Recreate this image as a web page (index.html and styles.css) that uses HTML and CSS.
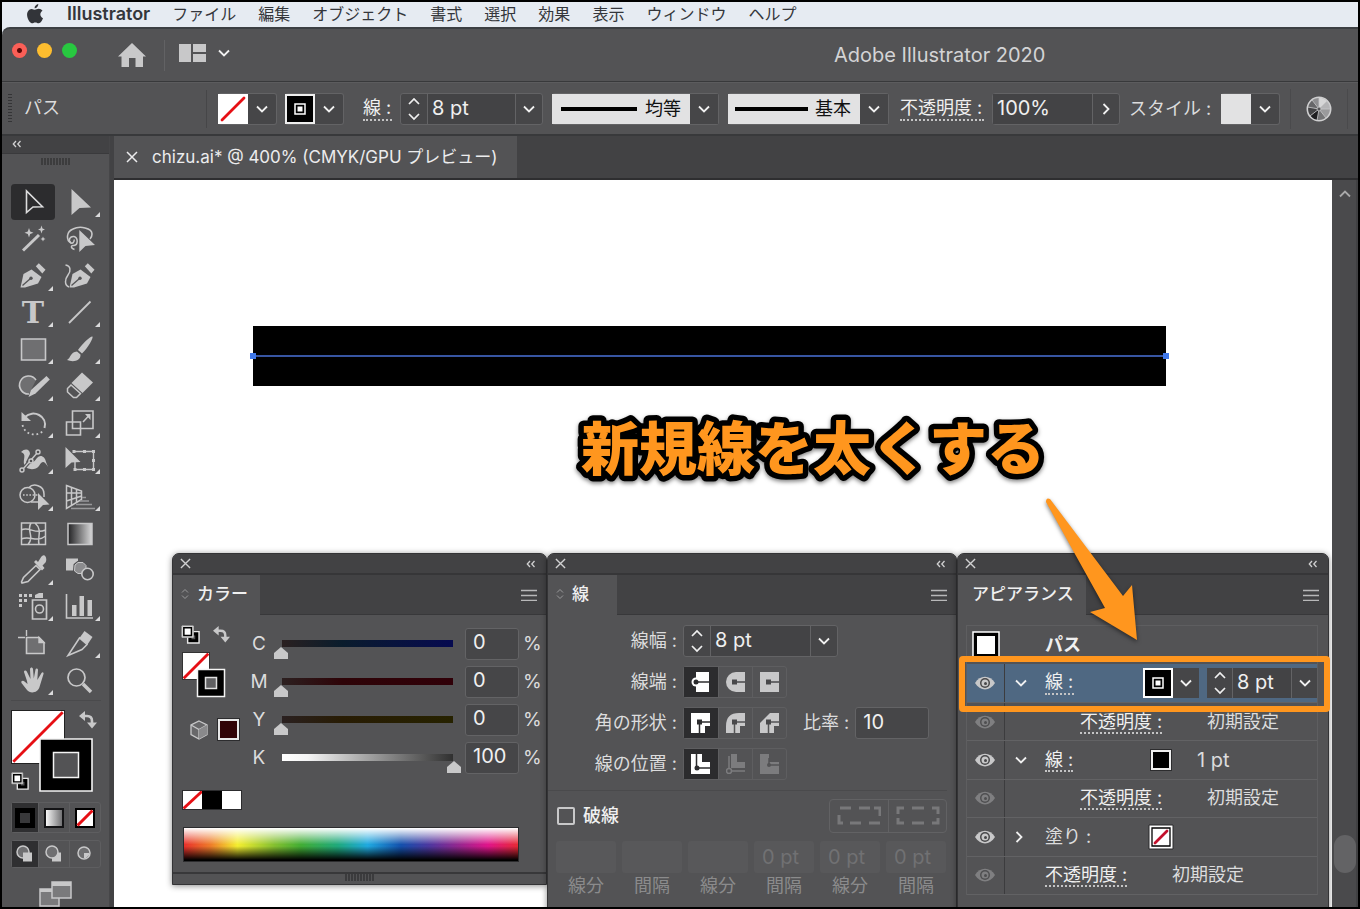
FILE: index.html
```html
<!DOCTYPE html>
<html lang="ja">
<head>
<meta charset="utf-8">
<meta name="viewport" content="width=device-width, initial-scale=1">
<title>Adobe Illustrator 2020</title>
<link rel="stylesheet" href="styles.css">
</head>
<body>
<svg class="sprite" aria-hidden="true">
  <symbol id="chev" viewBox="0 0 14 10"><path d="M2 2.5 7 7.5 12 2.5" fill="none" stroke="currentColor" stroke-width="1.8"/></symbol>
  <symbol id="chev-r" viewBox="0 0 10 14"><path d="M2.500 2 7.500 7 2.500 12" fill="none" stroke="currentColor" stroke-width="1.8"/></symbol>
  <symbol id="step" viewBox="0 0 14 24"><path d="M2 7 7 2 12 7M2 17 7 22 12 17" fill="none" stroke="currentColor" stroke-width="1.7"/></symbol>
  <symbol id="cross" viewBox="0 0 12 12"><path d="M1 1 11 11M11 1 1 11" fill="none" stroke="currentColor" stroke-width="1.5"/></symbol>
  <symbol id="fold" viewBox="0 0 10 8"><path d="M4 1 1.300 4 4 7M8.500 1 5.800 4 8.500 7" fill="none" stroke="currentColor" stroke-width="1.300"/></symbol>
  <symbol id="burger" viewBox="0 0 16 12"><path d="M0 1.500H16M0 6.500H16M0 11.500H16" stroke="currentColor" stroke-width="1.300"/></symbol>
  <symbol id="updown" viewBox="0 0 8 12"><path d="M1 4.500 4 1.500 7 4.500M1 7.500 4 10.500 7 7.500" fill="none" stroke="currentColor"/></symbol>
  <symbol id="grip-h" viewBox="0 0 30 7"><path d="M1 0V7M4 0V7M7 0V7M10 0V7M13 0V7M16 0V7M19 0V7M22 0V7M25 0V7M28 0V7" stroke="#343436" stroke-width="1.500"/></symbol>
  <symbol id="corner" viewBox="0 0 6 6"><path d="M6 0V6H0z" fill="#dadadb"/></symbol>
  <symbol id="eye" viewBox="0 0 20 14"><path d="M0 7C5-1.500 15-1.500 20 7 15 15.500 5 15.500 0 7z" fill="currentColor"/><circle cx="10" cy="7" r="5" fill="#48484a"/><circle cx="10" cy="7" r="3.500" fill="currentColor"/><circle cx="10.500" cy="7.500" r="1.500" fill="#48484a"/></symbol>
  <symbol id="swap" viewBox="0 0 18 18"><path d="M5 5H8Q13 5 13 10V12" fill="none" stroke="#c8c8c9" stroke-width="2.600"/><path d="M0 5 6 0V10zM8 11.500H18L13 17.500z" fill="#c8c8c9"/></symbol>
  <symbol id="defaults" viewBox="0 0 20 20"><path d="M7 7H19V19H7z" fill="#000" stroke="#e8e8e8" stroke-width="1.500"/><path d="M11 11H15V15H11z" fill="#535355"/><path d="M1 1H13V13H1z" fill="#e8e8e8" stroke="#bbb"/><path d="M3 3H11V11H3z" fill="#fff" stroke="#000" stroke-width="1.600"/></symbol>
  <symbol id="none" viewBox="0 0 20 20" preserveAspectRatio="none"><path d="M0 0H20V20H0z" fill="#fff"/><path d="M.500 19.500 19.500 .500" stroke="#e60f14" stroke-width="2.800" vector-effect="non-scaling-stroke"/></symbol>
  <symbol id="nib" viewBox="0 0 44 36"><path d="M9.500 29.500 12.500 16 20.500 11.500 30.500 19 27 25.500 14 29.500z" fill="#c8c8c9"/><path d="M24.800 8.200 27.800 5.200 34.500 11.800 31.300 15.500z" fill="#c8c8c9"/><path d="M11.500 27.500 19.500 20.500" stroke="#535355" stroke-width="1.300"/><circle cx="20" cy="20.300" r="1.700" fill="#535355"/></symbol>
</svg>

<nav class="menubar" aria-label="メニューバー">
  <a class="apple" href="#" aria-label="Apple"><svg width="18" height="20" viewBox="0 0 18 20"><path d="M12.300 0C12.500 2.200 10.600 4.400 8.600 4.300 8.400 2.300 10.300.300 12.300 0zM9 5.700C9.900 5.700 11 4.800 12.700 4.800 14.300 4.800 15.700 5.600 16.500 6.700 13.300 8.600 13.800 13 17 14.300 16.300 16.200 14.600 19.200 12.700 19.300 11.400 19.300 10.900 18.500 9.300 18.500 7.700 18.500 7.200 19.300 5.900 19.300 3.200 19.200-.300 11.900 1.600 7.900 2.500 5.900 4 4.900 5.700 4.900 7 4.900 8 5.700 9 5.700z" fill="#323439"/></svg></a>
  <a class="appname" href="#">Illustrator</a>
  <a href="#">ファイル</a><a href="#">編集</a><a href="#">オブジェクト</a><a href="#">書式</a><a href="#">選択</a><a href="#">効果</a><a href="#">表示</a><a href="#">ウィンドウ</a><a href="#">ヘルプ</a>
</nav>

<div class="app">
  <header class="titlebar">
    <div class="lights">
      <button class="light red" aria-label="閉じる"></button><button class="light yellow" aria-label="しまう"></button><button class="light green" aria-label="拡大"></button>
    </div>
    <button class="home" aria-label="ホーム"><svg width="28" height="26" viewBox="0 0 28 26"><path d="M14 1 28 14.500H25V25H17.500V16H11V25H3.500V14.500H0z" fill="#c8c8c9"/></svg></button>
    <button class="arrange" aria-label="ドキュメントレイアウト"><svg width="27" height="18" viewBox="0 0 27 18"><path d="M0 0H12V18H0zM14 0H27V8H14zM14 10H27V18H14z" fill="#c8c8c9"/></svg><svg class="chev"><use href="#chev"/></svg></button>
    <h1>Adobe Illustrator 2020</h1>
  </header>

  <div class="control">
    <span class="grip-v"></span>
    <span class="kind">パス</span>
    <div class="pick fillpick"><svg class="sw" viewBox="0 0 30 30"><path d="M0 0H30V30H0z" fill="#fff"/><path d="M4 26 26 4" stroke="#e60f14" stroke-width="2.800" stroke-linecap="round"/></svg><button class="drop" aria-label="塗り"><svg class="chev"><use href="#chev"/></svg></button></div>
    <div class="pick strokepick"><svg class="sw" viewBox="0 0 30 30"><path d="M1 1H29V29H1z" stroke="#eee" stroke-width="2"/><path d="M10 10H20V20H10z" stroke="#fff" stroke-width="1.500"/><path d="M12.500 12.500H17.500V17.500H12.500z" fill="#fff"/></svg><button class="drop" aria-label="線"><svg class="chev"><use href="#chev"/></svg></button></div>
    <label class="dotted wlabel" for="w1">線 :</label>
    <div class="combo c-weight"><button class="stepper" aria-label="増減"><svg><use href="#step"/></svg></button><input id="w1" type="text" value="8 pt"><button class="drop" aria-label="線幅の一覧"><svg class="chev"><use href="#chev"/></svg></button></div>
    <div class="profile p-width"><select aria-label="可変線幅プロファイル"><option>均等</option></select><span class="rule"></span><svg class="chev"><use href="#chev"/></svg></div>
    <div class="profile p-brush"><select aria-label="ブラシ定義"><option>基本</option></select><span class="rule"></span><svg class="chev"><use href="#chev"/></svg></div>
    <label class="dotted olabel" for="op">不透明度 :</label>
    <div class="combo c-op"><input id="op" type="text" value="100%"><button class="drop" aria-label="不透明度の一覧"><svg class="chev-r"><use href="#chev-r"/></svg></button></div>
    <span class="slabel">スタイル :</span>
    <div class="pick stylepick"><span class="sw light-sw"></span><button class="drop" aria-label="スタイル"><svg class="chev"><use href="#chev"/></svg></button></div>
    <button class="wheel" aria-label="オブジェクトを再配色"><svg width="26" height="26" viewBox="0 0 26 26"><circle cx="13" cy="13" r="11.500" fill="#8e8e90"/><path d="M13 13V1.500A11.500 11.500 0 0 1 21 5z" fill="#d6d6d7"/><path d="M13 13 21 5A11.500 11.500 0 0 1 24.500 13z" fill="#b4b4b6"/><path d="M13 13H24.500A11.500 11.500 0 0 1 20 22z" fill="#9a9a9c"/><path d="M13 13 20 22A11.500 11.500 0 0 1 11 24.300z" fill="#757577"/><path d="M13 13 11 24.300A11.500 11.500 0 0 1 4 20z" fill="#1f1f21"/><path d="M13 13 4 20A11.500 11.500 0 0 1 1.500 11z" fill="#444446"/><path d="M13 13 1.500 11A11.500 11.500 0 0 1 6 3.800z" fill="#676769"/><path d="M13 13 13 1.500M13 13 21 5M13 13H24.500M13 13 20 22M13 13 11 24.500M13 13 4 20M13 13 1.500 11M13 13 6 4" stroke="#c8c8c9" stroke-width=".800"/><circle cx="13" cy="13" r="11.700" fill="none" stroke="#cfcfd0" stroke-width="1.600"/><circle cx="13" cy="13" r="2" fill="#555557" stroke="#c8c8c9" stroke-width=".800"/></svg></button>
  </div>

  <div class="workspace">
    <aside class="tools">
      <div class="strip"><svg class="fold"><use href="#fold"/></svg></div>
      <svg class="grip"><use href="#grip-h"/></svg>
      <div class="toolgrid">
        <button class="on" aria-label="選択ツール"><svg viewBox="0 0 44 36"><path d="M15.500 7V28.500L22 23 31.500 22.800z" fill="none" stroke="#dcdcdd" stroke-width="1.600"/></svg></button>
        <button aria-label="ダイレクト選択ツール"><svg viewBox="0 0 44 36"><path d="M13.500 5V31L21.500 24 33 23.500z" fill="#c8c8c9"/></svg><svg class="corner"><use href="#corner"/></svg></button>
        <button aria-label="自動選択ツール"><svg viewBox="0 0 44 36"><path d="M12 29.500 28 14" stroke="#c8c8c9" stroke-width="3"/><path d="M18 7 19.200 10.600 22.500 11.800 19.200 13 18 16.500 16.800 13 13.500 11.800 16.800 10.600zM30.500 4.500 31.500 7.500 34 8.500 31.500 9.500 30.500 12.500 29.500 9.500 27 8.500 29.500 7.500zM32 15.500 32.800 17.300 34.500 18 32.800 18.700 32 20.500 31.200 18.700 29.500 18 31.200 17.300z" fill="#c8c8c9"/></svg></button>
        <button aria-label="なげなわツール"><svg viewBox="0 0 44 36"><path d="M13 22C8 19 8 11 15 8 22 4.500 34 7 34 13 34 15 33 17 32 18" fill="none" stroke="#c8c8c9" stroke-width="1.600"/><path d="M16.500 28.500C12 27 13 24 16 24.500 20 24 20.500 17 16 15.500 12 15 10 19 12.500 21.500 14 23.500 17 21 16 18.500" fill="none" stroke="#c8c8c9" stroke-width="1.500"/><path d="M21.300 9V31L27.500 25 37 24z" fill="#c8c8c9"/></svg></button>
        <button aria-label="ペンツール"><svg viewBox="0 0 44 36"><use href="#nib" width="44" height="36"/></svg><svg class="corner"><use href="#corner"/></svg></button>
        <button aria-label="曲線ツール"><svg viewBox="0 0 44 36"><path d="M7.500 7C13 8 13 13 10 17 7 21 6 27 11 29" fill="none" stroke="#c8c8c9" stroke-width="1.500"/><g transform="translate(2 0)"><use href="#nib" width="44" height="36"/></g></svg></button>
        <button aria-label="文字ツール"><span class="tee">T</span><svg class="corner"><use href="#corner"/></svg></button>
        <button aria-label="直線ツール"><svg viewBox="0 0 44 36"><path d="M11 28 32.500 6.500" stroke="#c8c8c9" stroke-width="1.800"/></svg><svg class="corner"><use href="#corner"/></svg></button>
        <button aria-label="長方形ツール"><svg viewBox="0 0 44 36"><path d="M10.500 7H34.500V28H10.500z" fill="#6f6f71" stroke="#c8c8c9" stroke-width="1.600"/></svg><svg class="corner"><use href="#corner"/></svg></button>
        <button aria-label="ブラシツール"><svg viewBox="0 0 44 36"><path d="M34.500 4.500C35.500 6 30 16 24 21.500L20 18C24 12 32.500 4 34.500 4.500zM19 19.500 22.500 22.500C23 29 15 30.500 9 28 13 26 12 20 19 19.500z" fill="#c8c8c9"/></svg><svg class="corner"><use href="#corner"/></svg></button>
        <button aria-label="塗りブラシツール"><svg viewBox="0 0 44 36"><path d="M25 12A9 9 0 1 0 18 26" fill="#6f6f71" stroke="#c8c8c9" stroke-width="1.600"/><path d="M35.500 8 38.800 11.500 24.500 25.500 17.500 29 20 22z" fill="#c8c8c9"/></svg><svg class="corner"><use href="#corner"/></svg></button>
        <button aria-label="消しゴムツール"><svg viewBox="0 0 44 36"><path d="M24 4.500 35 14.500 24.500 25 13.500 15z" fill="#c8c8c9"/><path d="M13 17 22.500 25.500 18.500 29.500H15.500L9.500 24V20.500z" fill="none" stroke="#c8c8c9" stroke-width="1.500"/></svg><svg class="corner"><use href="#corner"/></svg></button>
        <button aria-label="回転ツール"><svg viewBox="0 0 44 36"><path d="M14 12C22 4 37 11 33.500 23" fill="none" stroke="#c8c8c9" stroke-width="2"/><path d="M10.500 7V16H20z" fill="#c8c8c9"/><path d="M11.500 20C14 31 28 32 32.500 25" fill="none" stroke="#c8c8c9" stroke-width="1.800" stroke-dasharray="1.800 2.800"/></svg><svg class="corner"><use href="#corner"/></svg></button>
        <button aria-label="拡大・縮小ツール"><svg viewBox="0 0 44 36"><path d="M14.500 6H35V23.500H14.500zM8.500 17H22.500V30H8.500z" fill="none" stroke="#c8c8c9" stroke-width="1.600"/><path d="M25 17 31 10.500" stroke="#c8c8c9" stroke-width="1.500"/><path d="M27 9H32.500V15z" fill="#c8c8c9"/></svg><svg class="corner"><use href="#corner"/></svg></button>
        <button aria-label="線幅ツール"><svg viewBox="0 0 44 36"><path d="M10 10C14 6 19 7 19 12L15 20C18 25 23 20 26 16 29 12 34 14 35 20L37 25C33 18 31 19 28 24 24 29 15 28 13 22 12 17 16 12 10 10z" fill="#c8c8c9"/><path d="M12 27 27 10" stroke="#535355" stroke-width="3.500"/><path d="M12 27 27 10" stroke="#c8c8c9" stroke-width="1.400"/><circle cx="11" cy="28" r="2" fill="#535355" stroke="#c8c8c9" stroke-width="1.400"/><circle cx="20" cy="19" r="2" fill="#535355" stroke="#c8c8c9" stroke-width="1.400"/><circle cx="27" cy="10" r="2" fill="#535355" stroke="#c8c8c9" stroke-width="1.400"/></svg><svg class="corner"><use href="#corner"/></svg></button>
        <button aria-label="自由変形ツール"><svg viewBox="0 0 44 36"><path d="M16 9.500H35.500V27.500H17V20" fill="none" stroke="#c8c8c9" stroke-width="1.400"/><path d="M14.500 8H17.500V11H14.500zM25 8H28V11H25zM34 8H37V11H34zM34 17H37V20H34zM34 26H37V29H34zM25 26H28V29H25zM15.500 26H18.500V29H15.500z" fill="#c8c8c9"/><path d="M7.500 5V26L13.500 20.500 22.500 20z" fill="#c8c8c9"/></svg><svg class="corner"><use href="#corner"/></svg></button>
        <button aria-label="シェイプ形成ツール"><svg viewBox="0 0 44 36"><path d="M18 8.500C22 4 33 6 33 15V18M27 23H20" fill="none" stroke="#c8c8c9" stroke-width="1.500"/><circle cx="16.500" cy="16" r="7.500" fill="none" stroke="#c8c8c9" stroke-width="1.500"/><path d="M12 16H28" stroke="#c8c8c9" stroke-width="1.600" stroke-dasharray="1.600 1.600"/><path d="M27 14V31L32 26 38.500 25.500z" fill="#c8c8c9"/></svg><svg class="corner"><use href="#corner"/></svg></button>
        <button aria-label="遠近グリッドツール"><svg viewBox="0 0 44 36"><path d="M8.500 6.500 23.500 12V20.500L8.500 29.500zM13.500 8.500V26.500M18.500 10.500V23.500M8.500 14H23.500M8.500 22 23.500 17" fill="none" stroke="#c8c8c9" stroke-width="1.500"/><path d="M24 18.500H28M22 22H31M18 25.500H34M13 29.500H37" stroke="#98989a" stroke-width="1.300"/></svg><svg class="corner"><use href="#corner"/></svg></button>
        <button aria-label="メッシュツール"><svg viewBox="0 0 44 36"><path d="M10.500 7H34.500V28.500H10.500zM10.500 14C18 10 24 19 34.500 14M10.500 23C18 19 26 27 34.500 20M20 7C15 15 24 20 17 28.500M24 7C32 14 26 22 28 28.500" fill="none" stroke="#c8c8c9" stroke-width="1.500"/></svg></button>
        <button aria-label="グラデーションツール"><svg viewBox="0 0 44 36"><defs><linearGradient id="g1"><stop offset="0" stop-color="#222224"/><stop offset="1" stop-color="#d8d8d9"/></linearGradient></defs><path d="M10 7.500H34V28.500H10z" fill="url(#g1)" stroke="#c8c8c9" stroke-width="1.500"/></svg></button>
        <button aria-label="スポイトツール"><svg viewBox="0 0 44 36"><path d="M25 13.500 29 17.500 17 29.500 11 31 10.500 30 12.500 25.500z" fill="none" stroke="#c8c8c9" stroke-width="1.600"/><path d="M23 10 25 8 27 10 29.500 6C33-.500 37 6 34.500 10.500L31.500 13.500 33.500 16 31 18.500z" fill="#c8c8c9"/></svg><svg class="corner"><use href="#corner"/></svg></button>
        <button aria-label="ブレンドツール"><svg viewBox="0 0 44 36"><path d="M8 6.500H20V18.500H8z" fill="#c8c8c9"/><path d="M17 13 20 10.500H25L28 13.500V18.500L25 21.500H20L16.500 19z" fill="#8c8c8e" stroke="#535355" stroke-width="3"/><path d="M17 13 20 10.500H25L28 13.500V18.500L25 21.500H20L16.500 19z" fill="#8c8c8e" stroke="#c8c8c9"/><circle cx="29.500" cy="22" r="5.700" fill="#535355" stroke="#c8c8c9" stroke-width="1.600"/></svg></button>
        <button aria-label="シンボルスプレーツール"><svg viewBox="0 0 44 36"><path d="M8 5H11V8H8zM13 5H16V8H13zM18 5H21V8H18zM8 10H11V13H8zM13 10H16V13H13zM8 15H11V18H8zM24 6 28 4H32V9H24z" fill="#c8c8c9"/><path d="M21.500 11H35.500V30H21.500z" fill="none" stroke="#c8c8c9" stroke-width="1.700"/><circle cx="28.500" cy="20" r="4" fill="none" stroke="#c8c8c9" stroke-width="1.600"/></svg><svg class="corner"><use href="#corner"/></svg></button>
        <button aria-label="棒グラフツール"><svg viewBox="0 0 44 36"><path d="M8.500 5V29H35" fill="none" stroke="#c8c8c9" stroke-width="1.600"/><path d="M14 16H18.500V27H14zM21.500 7H26V27H21.500zM29.500 11H34V27H29.500z" fill="#c8c8c9"/></svg><svg class="corner"><use href="#corner"/></svg></button>
        <button aria-label="アートボードツール"><svg viewBox="0 0 44 36"><path d="M15.500 11.500H28L33 16.500V27.500H15.500z" fill="#6f6f71" stroke="#c8c8c9" stroke-width="1.600"/><path d="M15.500 4V10M7 11.500H14M28 11.500V16.500H33z" fill="#c8c8c9" stroke="#c8c8c9" stroke-width="1.400"/></svg></button>
        <button aria-label="スライスツール"><svg viewBox="0 0 44 36"><path d="M10 29.500 21.500 12 29 18.500 24 23.500z" fill="none" stroke="#c8c8c9" stroke-width="1.500"/><path d="M26.500 5 34.500 11 29.500 18.500 21.500 12z" fill="#c8c8c9"/></svg><svg class="corner"><use href="#corner"/></svg></button>
        <button aria-label="手のひらツール"><svg viewBox="0 0 44 36"><path d="M16 18 13 9C13 7 15 7 15.800 8.500L19.500 16 19 6C19.500 4 21.500 4 22 6L22.800 15.500 24.500 6.500C25 5 27 5.500 27 7L26.300 17 30.500 10C31.500 8.500 33 9.500 32.500 11L28.500 24C27 30 19 31 16 27L10.500 20C9.500 18 12 17 13.500 18.500L16.500 21z" fill="#c8c8c9"/></svg><svg class="corner"><use href="#corner"/></svg></button>
        <button aria-label="ズームツール"><svg viewBox="0 0 44 36"><circle cx="18.500" cy="14.500" r="8.500" fill="none" stroke="#c8c8c9" stroke-width="1.700"/><path d="M25 21 33 29" stroke="#c8c8c9" stroke-width="3.500"/></svg></button>
      </div>
      <div class="paint">
        <svg class="pf"><use href="#none"/></svg>
        <svg class="ps" viewBox="0 0 54 54"><path d="M1 1H53V53H1z" stroke="#f4f4f4" stroke-width="1.600"/><path d="M14.500 14.500H39.500V39.500H14.500z" fill="#535355" stroke="#f4f4f4" stroke-width="1.500"/></svg>
        <button class="swap" aria-label="塗りと線を入れ替え"><svg width="18" height="18"><use href="#swap"/></svg></button>
        <button class="defs" aria-label="初期設定の塗りと線"><svg width="18" height="18"><use href="#defaults"/></svg></button>
      </div>
      <div class="tri">
        <button class="on" aria-label="カラー"><svg width="20" height="20"><path d="M1 1H19V19H1z" stroke="#000" stroke-width="2"/><path d="M5 5H15V15H5z" fill="#38383a"/></svg></button>
        <button aria-label="グラデーション"><svg width="20" height="20"><defs><linearGradient id="g2"><stop offset="0" stop-color="#fff"/><stop offset="1" stop-color="#6a6a6c"/></linearGradient></defs><path d="M1 1H19V19H1z" fill="url(#g2)" stroke="#141416" stroke-width="2"/></svg></button>
        <button aria-label="なし"><svg width="20" height="20"><path d="M1 1H19V19H1z" fill="#fff" stroke="#000" stroke-width="2"/><path d="M2.500 17.500 17.500 2.500" stroke="#e60f14" stroke-width="3"/></svg></button>
      </div>
      <div class="tri modes">
        <button class="on" aria-label="標準描画"><svg width="20" height="18"><circle cx="8" cy="7" r="6" fill="#6f6f71" stroke="#c8c8c9" stroke-width="1.500"/><path d="M8 7.500H17V16.500H8z" fill="#c8c8c9"/></svg></button>
        <button aria-label="背面描画"><svg width="20" height="18"><path d="M8 7.500H17V16.500H8z" fill="#c8c8c9"/><circle cx="8" cy="7" r="6" fill="#6f6f71" stroke="#c8c8c9" stroke-width="1.500"/></svg></button>
        <button aria-label="内側描画"><svg width="20" height="18"><circle cx="9" cy="8" r="6" fill="#6f6f71" stroke="#c8c8c9" stroke-width="1.500"/><path d="M9 8H14V10L11 13H9z" fill="#c8c8c9"/></svg></button>
      </div>
      <button class="screen" aria-label="スクリーンモード"><svg width="34" height="26" viewBox="0 0 34 26"><path d="M1 8H20V25H1z" fill="#7a7a7c" stroke="#c8c8c9" stroke-width="1.500"/><path d="M1 8H20V11H1z" fill="#c8c8c9"/><path d="M13 1H32V17H13z" fill="#7a7a7c" stroke="#c8c8c9" stroke-width="1.500"/><path d="M13 1H32V5H13z" fill="#c8c8c9"/></svg></button>
    </aside>

    <main class="doc">
      <div class="doctabs"><div class="doctab"><button aria-label="閉じる"><svg width="12" height="12"><use href="#cross"/></svg></button><span>chizu.ai* @ 400% (CMYK/GPU プレビュー)</span></div></div>
      <div class="view">
        <div class="canvas">
          <svg class="art" width="920" height="64" viewBox="0 0 920 64"><path d="M3 2H916V62H3z" fill="#000"/><path d="M3 32H916" stroke="#4a72d8" stroke-width="1.500"/><path d="M0 29H6V35H0zM913 29H919V35H913z" fill="#3f78ea"/></svg>

          <section class="panel color" aria-label="カラー">
            <div class="phead"><button aria-label="閉じる"><svg width="11" height="11"><use href="#cross"/></svg></button><svg class="fold"><use href="#fold"/></svg></div>
            <div class="ptabs"><h2><svg width="8" height="12"><use href="#updown"/></svg>カラー</h2><button aria-label="メニュー"><svg width="16" height="12"><use href="#burger"/></svg></button></div>
            <div class="cbody">
              <div class="cleft">
                <div class="crow"><svg width="19" height="19"><use href="#defaults"/></svg><svg width="17" height="17"><use href="#swap"/></svg></div>
                <div class="minipaint"><svg class="mf"><use href="#none"/></svg><svg class="ms" viewBox="0 0 30 30"><path d="M1.500 1.500H28.500V28.500H1.500z" stroke="#f4f4f4" stroke-width="1.500"/><path d="M9.500 9.500H20.500V20.500H9.500z" fill="#606062" stroke="#e0e0e0" stroke-width="1.500"/></svg></div>
                <div class="crow gamut"><svg width="18" height="20" viewBox="0 0 18 20"><path d="M9 1 17 5V14.500L9 19 1 14.500V5z" fill="#68686a" stroke="#c8c8c9" stroke-width="1.300"/><path d="M1 5 9 9.500 17 5M9 9.500V19" fill="none" stroke="#c8c8c9" stroke-width="1.300"/><path d="M9 9.500 17 5V14.500L9 19z" fill="#8a8a8c"/></svg><span class="oog"></span></div>
              </div>
              <div class="sliders">
                <div class="srow"><label for="c">C</label><input id="c" class="tc" type="range" min="0" max="100" value="0"><input type="text" aria-label="C" value="0"><span>%</span></div>
                <div class="srow"><label for="m">M</label><input id="m" class="tm" type="range" min="0" max="100" value="0"><input type="text" aria-label="M" value="0"><span>%</span></div>
                <div class="srow"><label for="y">Y</label><input id="y" class="ty" type="range" min="0" max="100" value="0"><input type="text" aria-label="Y" value="0"><span>%</span></div>
                <div class="srow"><label for="k">K</label><input id="k" class="tk" type="range" min="0" max="100" value="100"><input type="text" aria-label="K" value="100"><span>%</span></div>
              </div>
            </div>
            <div class="quick"><svg><use href="#none"/></svg><span class="qk"></span><span class="qw"></span></div>
            <div class="spectrum"></div>
            <div class="pfoot"><svg class="grip"><use href="#grip-h"/></svg></div>
          </section>

          <section class="panel stroke" aria-label="線">
            <div class="phead"><button aria-label="閉じる"><svg width="11" height="11"><use href="#cross"/></svg></button><svg class="fold"><use href="#fold"/></svg></div>
            <div class="ptabs"><h2><svg width="8" height="12"><use href="#updown"/></svg>線</h2><button aria-label="メニュー"><svg width="16" height="12"><use href="#burger"/></svg></button></div>
            <div class="form">
              <div class="frow"><label for="w2">線幅 :</label><div class="combo c-weight2"><button class="stepper" aria-label="増減"><svg><use href="#step"/></svg></button><input id="w2" type="text" value="8 pt"><button class="drop" aria-label="線幅の一覧"><svg class="chev"><use href="#chev"/></svg></button></div></div>
              <div class="frow"><span class="lab">線端 :</span><div class="seg">
                <button class="on" aria-label="線端なし"><svg viewBox="0 0 20 20"><circle cx="5" cy="10" r="4.500" fill="#fff"/><path d="M5 0H18V20H5z" fill="#fff"/><path d="M5 10H18" stroke="#2c2c2e" stroke-width="1.500"/><circle cx="5" cy="10" r="2.500" fill="#2c2c2e"/></svg></button>
                <button aria-label="丸型線端"><svg viewBox="0 0 20 20"><path d="M10 0H19V20H10A10 10 0 0 1 10 0z" fill="#c8c8c9"/><path d="M9 10H19" stroke="#48484a" stroke-width="1.500"/><path d="M6 7.500H11V12.500H6z" fill="#48484a"/></svg></button>
                <button aria-label="突出線端"><svg viewBox="0 0 20 20"><path d="M0 0H19V20H0z" fill="#c8c8c9"/><path d="M9 10H19" stroke="#48484a" stroke-width="1.500"/><path d="M6 7.500H11V12.500H6z" fill="#48484a"/></svg></button></div></div>
              <div class="frow"><span class="lab">角の形状 :</span><div class="seg">
                <button class="on" aria-label="マイター結合"><svg viewBox="0 0 20 20"><path d="M0 0H19V13H14V20H0z" fill="#fff"/><path d="M8.500 20V9H19" fill="none" stroke="#2c2c2e" stroke-width="1.500"/><path d="M6 6.500H11V11.500H6z" fill="#2c2c2e"/></svg></button>
                <button aria-label="ラウンド結合"><svg viewBox="0 0 20 20"><path d="M0 20V13Q0 0 13 0H19V13H14V20z" fill="#c8c8c9"/><path d="M8.500 20V9H19" fill="none" stroke="#535355" stroke-width="1.500"/><path d="M6 6.500H11V11.500H6z" fill="#48484a"/></svg></button>
                <button aria-label="ベベル結合"><svg viewBox="0 0 20 20"><path d="M0 20V10L10 0H19V13H14V20z" fill="#c8c8c9"/><path d="M8.500 20V9H19" fill="none" stroke="#535355" stroke-width="1.500"/><path d="M6 6.500H11V11.500H6z" fill="#48484a"/></svg></button></div>
                <label class="ratio" for="r">比率 :</label><input id="r" class="rin" type="text" value="10"></div>
              <div class="frow"><span class="lab">線の位置 :</span><div class="seg">
                <button class="on" aria-label="線を中央に揃える"><svg viewBox="0 0 20 20"><path d="M0 0H11V8H19V20H0z" fill="#fff"/><path d="M5.500 0V14H19" fill="none" stroke="#2c2c2e" stroke-width="1.500"/><circle cx="6" cy="14" r="2.500" fill="#2c2c2e"/></svg></button>
                <button aria-label="線を内側に揃える"><svg class="dim" viewBox="0 0 20 20"><path d="M5 0H11V8H19V14H5z" fill="#7c7c7e"/><path d="M3 2V14M5 17H19" fill="none" stroke="#7c7c7e" stroke-width="1.500"/><circle cx="3" cy="17" r="2.500" fill="none" stroke="#7c7c7e" stroke-width="1.500"/></svg></button>
                <button aria-label="線を外側に揃える"><svg class="dim" viewBox="0 0 20 20"><path d="M0 0H9V8H19V20H0z" fill="#7c7c7e"/><path d="M9 4V11H19" fill="none" stroke="#535355" stroke-width="1.500"/><circle cx="9" cy="11" r="2" fill="#535355"/></svg></button></div></div>
            </div>
            <div class="dashrow"><label><input type="checkbox">破線</label><div class="dashseg">
              <button disabled aria-label="線分と間隔の正確な長さを保持"><svg viewBox="0 0 44 20"><path d="M3 2H14M22 2H33M37 2H43V10M2 9V17H6M13 17H24M32 17H43" fill="none" stroke="#78787a" stroke-width="3"/></svg></button>
              <button disabled aria-label="コーナーやパス先端に破線の先端を整列"><svg viewBox="0 0 44 20"><path d="M2 8V2H8M16 2H28M36 2H42V8M42 12V17H36M28 17H16M8 17H2V12" fill="none" stroke="#78787a" stroke-width="3"/></svg></button></div></div>
            <div class="dashes">
              <label><input type="text" disabled>線分</label><label><input type="text" disabled>間隔</label><label><input type="text" disabled>線分</label><label><input type="text" disabled value="0 pt">間隔</label><label><input type="text" disabled value="0 pt">線分</label><label><input type="text" disabled value="0 pt">間隔</label>
            </div>
          </section>

          <section class="panel look" aria-label="アピアランス">
            <div class="phead"><button aria-label="閉じる"><svg width="11" height="11"><use href="#cross"/></svg></button><svg class="fold"><use href="#fold"/></svg></div>
            <div class="ptabs"><h2>アピアランス</h2><button aria-label="メニュー"><svg width="16" height="12"><use href="#burger"/></svg></button></div>
            <div class="rows">
              <div class="row head"><svg class="thumb" viewBox="0 0 28 28"><path d="M1 1H27V27H1z" stroke="#fff" stroke-width="1.500"/><path d="M5 5H23V23H5z" fill="#fff"/></svg><span></span><strong>パス</strong></div>
              <div class="row sel"><button class="eye" aria-label="表示"><svg><use href="#eye"/></svg></button><button class="tw" aria-label="閉じる"><svg class="chev"><use href="#chev"/></svg></button><label class="dotted" for="w3">線 :</label>
                <div class="rowctl"><div class="pick"><svg class="sw" viewBox="0 0 30 30"><path d="M1 1H29V29H1z" stroke="#fff" stroke-width="2"/><path d="M10 10H20V20H10z" stroke="#fff" stroke-width="1.500"/><path d="M12.500 12.500H17.500V17.500H12.500z" fill="#fff"/></svg><button class="drop" aria-label="線のカラー"><svg class="chev"><use href="#chev"/></svg></button></div><div class="combo"><button class="stepper" aria-label="増減"><svg><use href="#step"/></svg></button><input id="w3" type="text" value="8 pt"><button class="drop" aria-label="線幅の一覧"><svg class="chev"><use href="#chev"/></svg></button></div></div></div>
              <div class="row sub"><button class="eye off" aria-label="表示"><svg><use href="#eye"/></svg></button><span></span><span class="in"><a class="dotted" href="#">不透明度 :</a></span><span class="val">初期設定</span></div>
              <div class="row"><button class="eye" aria-label="表示"><svg><use href="#eye"/></svg></button><button class="tw" aria-label="閉じる"><svg class="chev"><use href="#chev"/></svg></button><span><a class="dotted" href="#">線 :</a></span><span class="chip black"></span><span class="pt">1 pt</span></div>
              <div class="row sub"><button class="eye off" aria-label="表示"><svg><use href="#eye"/></svg></button><span></span><span class="in"><a class="dotted" href="#">不透明度 :</a></span><span class="val">初期設定</span></div>
              <div class="row"><button class="eye" aria-label="表示"><svg><use href="#eye"/></svg></button><button class="tw" aria-label="開く"><svg class="chev-r"><use href="#chev-r"/></svg></button><span>塗り :</span><svg class="chip nofill" viewBox="0 0 26 26"><path d="M1 1H25V25H1z" fill="#fff" stroke="#2a2a2c" stroke-width="1"/><path d="M4 4H22V22H4z" fill="#fff" stroke="#000" stroke-width="1.300"/><path d="M7 19 19 7" stroke="#c3102c" stroke-width="2.800" stroke-linecap="round"/></svg></div>
              <div class="row last"><button class="eye off" aria-label="表示"><svg><use href="#eye"/></svg></button><span></span><span><a class="dotted" href="#">不透明度 :</a></span><span class="val2">初期設定</span></div>
            </div>
            <div class="focus"></div>
          </section>

          <svg class="note" width="640" height="260" viewBox="0 0 640 260" role="img" aria-label="新規線を太くする">
            <text x="22" y="72">新規線を太くする</text>
            <path d="M487 104Q487 99 491 101L564 198 573 187 578 242 531 214 546 210Z"/>
          </svg>
        </div>
        <div class="scroll"><svg class="chev up"><use href="#chev"/></svg><span class="knob"></span></div>
      </div>
    </main>
  </div>
</div>
</body>
</html>
```
FILE: styles.css
```css
* { box-sizing: border-box; }
html { height: 100%; }
body {
  margin: 0;
  height: 100%;
  border: 2px solid #000;
  background: #e6ebf2;
  display: flex;
  flex-direction: column;
  overflow: hidden;
  color: #dcdcdd;
  font: 18px/24px Inter, "Noto Sans CJK JP", sans-serif;
}
button { padding: 0; border: 0; background: none; color: inherit; font: inherit; display: flex; align-items: center; justify-content: center; }
input, select { font: inherit; color: inherit; margin: 0; }
a { color: inherit; text-decoration: none; }
svg { display: block; flex: none; fill: #000; }
h1, h2 { margin: 0; font-weight: 400; }
.sprite { position: absolute; width: 0; height: 0; }
.chev { width: 14px; height: 10px; color: #f0f0f0; }
.chev-r { width: 10px; height: 14px; color: #f0f0f0; }
.fold { width: 10px; height: 8px; color: #d0d0d1; }
.grip { width: 30px; height: 7px; }
.dotted { border-bottom: 2px dotted #c4c4c5; line-height: 22px; color: #f0f0f0; }

/* macOS menu bar */
.menubar { flex: none; height: 25px; display: flex; align-items: center; gap: 22px; padding: 0 0 2px 24px; color: #34363b; font-size: 16px; white-space: nowrap; }
.menubar .appname { font-size: 18px; font-weight: 600; margin-left: 1px; }

.app { flex: 1; min-height: 0; display: flex; flex-direction: column; background: #535355; border-top: 2px solid #3c3f43; border-radius: 8px 0 0 0; overflow: hidden; }

/* title bar */
.titlebar { flex: none; height: 53px; display: flex; align-items: center; border-bottom: 1px solid #38393b; }
.lights { display: flex; gap: 10px; padding: 0 0 10px 10px; }
.light { width: 15px; height: 15px; border-radius: 50%; }
.red { background: radial-gradient(circle, #5a0806 0 2px, #fb5f57 3px); }
.yellow { background: #fdbd2f; }
.green { background: #28c840; }
.home { margin: 0 0 1px 41px; }
.arrange { margin-left: 18px; padding-left: 14px; height: 31px; border-left: 1px solid #626264; gap: 11px; padding-bottom: 5px; }
.titlebar h1 { flex: 1; padding-left: 603px; font-size: 20px; white-space: nowrap; color: #d4d4d5; }

/* control bar */
.control { flex: none; height: 54px; display: flex; align-items: center; padding-left: 6px; border-top: 1px solid #5c5c5e; border-bottom: 2px solid #38393b; white-space: nowrap; }
.grip-v { width: 4px; height: 30px; background: repeating-linear-gradient(#343436 0 1px, transparent 1px 3px); }
.kind { width: 195px; height: 38px; line-height: 36px; padding-left: 12px; border-right: 1px solid #464648; }
.pick, .combo { display: flex; height: 32px; border: 1px solid #636365; border-radius: 3px; background: #464648; }
.pick { border-left: 0; align-items: center; }
.sw { width: 30px; height: 30px; }
.light-sw { background: #e2e2e3; }
.drop { width: 28px; flex: none; }
.fillpick { margin-left: 11px; }
.strokepick { margin-left: 8px; }
.wlabel { margin-left: 19px; width: 29px; }
.combo input { flex: 1; min-width: 0; border: 0; padding: 0 0 2px 4px; background: #434345; font-size: 20px; color: #f0f0f0; }
.combo .drop { width: 27px; border-left: 1px solid #636365; }
.stepper { width: 27px; flex: none; border-right: 1px solid #636365; }
.stepper svg { width: 14px; height: 24px; color: #f0f0f0; }
.c-weight { margin-left: 8px; width: 143px; }
.profile { display: grid; grid-template-columns: 1fr 28px; align-items: center; height: 32px; margin-left: 9px; border: 1px solid #636365; border-left: 0; border-radius: 3px; }
.profile select { grid-area: 1 / 1 / 2 / 3; width: 100%; height: 30px; appearance: none; border: 0; border-radius: 0; background: linear-gradient(90deg, #e2e2e3 calc(100% - 28px), #464648 0); color: #111; }
.profile .rule { grid-area: 1 / 1; margin-left: 9px; height: 4px; background: #000; pointer-events: none; }
.profile .chev { grid-area: 1 / 2; justify-self: center; pointer-events: none; }
.p-width { width: 167px; }
.p-width select { padding: 0 0 0 93px; }
.p-width .rule { width: 76px; }
.p-brush { width: 161px; }
.p-brush select { padding: 0 0 0 87px; }
.p-brush .rule { width: 73px; margin-left: 7px; }
.olabel { margin-left: 11px; width: 84px; }
.c-op { margin-left: 8px; width: 128px; }
.slabel { margin-left: 9px; width: 92px; }
.wheel { margin-left: 10px; padding: 0 15px; height: 40px; border: solid #4a4a4c; border-width: 0 1px; }

/* workspace */
.workspace { flex: 1; min-height: 0; display: flex; background: #424244; }
.tools { flex: none; width: 108px; background: #535355; border-right: 1px solid #464648; display: flex; flex-direction: column; }
.strip { height: 18px; flex: none; background: #424244; border-bottom: 1px solid #3a3a3c; padding: 4px 0 0 10px; }
.tools > .grip { margin: 4px 0 18px 39px; }
.toolgrid { flex: none; height: 516px; margin-left: 9px; display: grid; grid-template-columns: 44px 44px; grid-auto-rows: 1fr; column-gap: 3px; }
.toolgrid button { position: relative; border-radius: 4px; }
.toolgrid button.on { background: #2c2c2e; background-clip: padding-box; border-block: 1px solid transparent; }
.toolgrid button > svg:not(.corner) { width: 44px; height: 36px; }
.toolgrid .corner { position: absolute; right: 2px; bottom: 4px; width: 5px; height: 5px; }
.tee { font: bold 30px/34px "DejaVu Serif", serif; color: #c8c8c9; }
.paint { position: relative; flex: none; height: 97px; margin: 1px 8px 0 9px; border-top: 1px solid #4a4a4c; }
.paint > * { position: absolute; }
.pf { left: 0; top: 9px; width: 54px; height: 54px; border: 1px solid #222; }
.ps { left: 28px; top: 37px; width: 54px; height: 54px; }
.swap { left: 68px; top: 10px; }
.defs { left: 0; top: 71px; }
.tri { flex: none; display: grid; grid-template-columns: 26px 31px 1fr; width: 90px; height: 31px; margin: 5px 0 0 9px; border: 1px solid #5e5e60; border-radius: 3px; }
.tri button + button { border-left: 1px solid #5e5e60; }
.tri .on { background: #2f2f31; }
.modes { height: 28px; margin-top: 7px; }
.screen { margin: 13px 0 0 37px; width: 34px; }

.doc { flex: 1; min-width: 0; margin-left: 4px; display: flex; flex-direction: column; }
.doctabs { flex: none; height: 44px; display: flex; border-bottom: 2px solid #2e2e30; }
.doctab { display: flex; align-items: center; gap: 14px; width: 403px; padding-left: 12px; background: #535355; font-size: 17px; color: #ececed; white-space: nowrap; }
.view { flex: 1; min-height: 0; display: flex; }
.canvas { flex: 1; position: relative; overflow: hidden; background: #fff; }
.scroll { flex: none; width: 26px; position: relative; background: #4a4a4c; border-right: 2px solid #414143; }
.up { margin: 9px 0 0 6px; transform: scaleY(-1); color: #a8a8a9; }
.knob { position: absolute; left: 2px; bottom: 34px; width: 22px; height: 38px; border-radius: 11px; background: #636365; }
.art { position: absolute; left: 136px; top: 144px; }

/* floating panels */
.panel { position: absolute; top: 373px; background: #535355; border: 1px solid #343436; border-radius: 7px 7px 0 0; box-shadow: 0 1px 6px rgba(0, 0, 0, .45); }
.phead { height: 21px; display: flex; align-items: center; justify-content: space-between; padding: 0 10px 0 7px; background: #424244; border-bottom: 2px solid #363638; border-radius: 6px 6px 0 0; color: #d0d0d1; }
.ptabs { height: 40px; display: flex; justify-content: space-between; background: linear-gradient(#424244 39px, #38383a 0); color: #b8b8b9; }
.ptabs h2 { display: flex; align-items: center; gap: 8px; padding: 0 0 2px 8px; background: #535355; font-size: 17px; font-weight: 500; color: #f0f0f0; white-space: nowrap; }
.ptabs h2 svg { color: #9a9a9b; }
.ptabs button { margin-right: 9px; }

.color { left: 58px; width: 375px; }
.color h2 { width: 87px; }
.cbody { display: flex; padding: 10px 5px 0 8px; }
.cleft { width: 66px; flex: none; }
.crow { display: flex; align-items: center; gap: 13px; }
.minipaint { position: relative; height: 46px; margin-top: 8px; }
.minipaint > * { position: absolute; }
.mf { left: 1px; top: 0; width: 28px; height: 28px; border: 1px solid #333; }
.ms { left: 15px; top: 16px; width: 30px; height: 30px; }
.gamut { margin: 21px 0 0 9px; gap: 10px; }
.oog { width: 21px; height: 21px; border: 2px solid #e8e8e8; background: #310306; outline: 1px solid #2c2c2e; }
.sliders { flex: 1; display: grid; grid-auto-rows: 38px; }
.srow { display: grid; grid-template-columns: 23px 1fr 54px 18px; column-gap: 4px; align-items: center; font-size: 19px; }
.srow label { padding-left: 1px; text-align: center; }
.srow span { font-size: 19px; }
.srow input[type=text] { width: 54px; height: 32px; border: 1px solid #636365; border-radius: 3px; background: #464648; padding: 0 0 4px 7px; font-size: 20px; color: #f0f0f0; }
.srow input[type=range] { appearance: none; width: 100%; height: 20px; margin: 12px 0 0; background: var(--ramp) center top / calc(100% - 16px) 7px no-repeat; }
.srow input[type=range]::-webkit-slider-runnable-track { height: 20px; }
.srow input[type=range]::-webkit-slider-thumb { appearance: none; width: 14px; height: 12px; margin-top: 7px; background: #c8c8c9; clip-path: polygon(50% 0, 100% 50%, 100% 100%, 0 100%, 0 50%); }
.tc { --ramp: linear-gradient(90deg, #2a2020, #0a1c2c 35%, #060a50); }
.tm { --ramp: linear-gradient(90deg, #2c2020, #2e0408 35%, #300008); }
.ty { --ramp: linear-gradient(90deg, #2a2020, #281c04 35%, #262200); }
.tk { --ramp: linear-gradient(90deg, #fff, #f4f4f4 15%, #303030); }
.quick { display: flex; width: 60px; height: 20px; margin: 13px 0 0 9px; border: 1px solid #2c2c2e; }
.quick > * { width: 20px; height: 18px; flex: 1; }
.qk { background: #000; }
.qw { background: #fff; }
.spectrum { margin: 17px 27px 0 10px; height: 35px; border: 1px solid #2c2c2e; background: linear-gradient(#fff, rgba(255, 255, 255, 0) 50%, rgba(0, 0, 0, 0) 55%, #000 97%), linear-gradient(90deg, #e8302c, #ee7d2a 8%, #f4ee30 16%, #85c030 27%, #42ad34 35%, #1fa97c 46%, #1fa9e0 55%, #1450ac 65%, #4a38a0 73%, #93278f 82%, #e0148a 91%, #e62a34); }
.pfoot { height: 12px; margin-top: 10px; border-top: 2px solid #38383a; display: flex; justify-content: center; }

.stroke { left: 433px; width: 410px; min-height: 400px; }
.stroke h2 { width: 69px; }
.form { padding: 5px 0 6px; display: grid; grid-auto-rows: 41px; margin: 0 9px 0 0; border-bottom: 1px solid #4a4a4c; }
.frow { display: flex; align-items: center; }
.frow > label:first-child, .lab { width: 129px; margin-right: 6px; text-align: right; }
.c-weight2 { width: 155px; }
.seg { display: grid; grid-template-columns: repeat(3, 34px); height: 32px; border: 1px solid #5e5e60; border-radius: 3px; }
.seg svg { width: 20px; height: 20px; }
.seg button + button { border-left: 1px solid #5e5e60; }
.seg .on { background: #2c2c2e; }
.ratio { margin: 0 6px 0 16px; }
.rin { width: 74px; height: 32px; border: 1px solid #636365; border-radius: 3px; background: #464648; padding: 0 0 2px 7px; font-size: 20px; color: #f0f0f0; }
.dashrow { display: flex; align-items: center; justify-content: space-between; height: 50px; padding: 0 9px; }
.dashrow label { display: flex; align-items: center; gap: 8px; color: #f0f0f0; font-weight: 500; }
.dashrow input { appearance: none; width: 18px; height: 18px; border: 2px solid #c8c8c9; border-radius: 2px; }
.dashseg { display: flex; height: 34px; border: 1px solid #626264; border-radius: 4px; }
.dashseg button { width: 58px; }
.dashseg button + button { border-left: 1px solid #626264; }
.dashseg svg { width: 44px; height: 20px; }
.dashes { display: grid; grid-template-columns: repeat(6, 1fr); gap: 6px; padding: 0 10px 0 8px; text-align: center; color: #8b8b8c; }
.dashes label { display: block; }
.dashes input { display: block; width: 100%; height: 32px; border: 0; border-radius: 3px; background: #58585a; color: #717173; font-size: 20px; padding: 0 0 0 8px; margin-bottom: 1px; }

.look { left: 843px; width: 372px; min-height: 400px; }
.look h2 { width: 128px; padding-left: 14px; }
.rows { height: 270px; margin: 10px 10px 0 8px; display: grid; grid-auto-rows: 1fr; border: 1px solid #5e5e60; border-bottom: 0; }
.row { display: grid; grid-template-columns: 38px 40px 94px 1fr; align-items: center; border-bottom: 1px solid #626264; white-space: nowrap; }
.row.head { border-bottom: 0; }
.thumb { width: 28px; height: 28px; margin-left: 5px; }
.head strong { color: #f0f0f0; }
.eye { height: 100%; padding-right: 2px; border-right: 1px solid #3c3c3e; }
.eye svg { width: 20px; height: 14px; color: #c8c8c9; }
.eye.off svg { opacity: .38; }
.tw { justify-content: flex-start; padding-left: 9px; }
.sel { background: #4f6882; grid-template-columns: 38px 40px 29px 1fr; }
.sel .dotted { width: 29px; }
.rowctl { display: flex; gap: 8px; justify-content: flex-end; }
.rowctl .pick, .rowctl .combo { border: 0; border-radius: 0; height: 30px; }
.rowctl .drop, .rowctl .stepper { width: 26px; }
.rowctl .combo { width: 110px; }
.sub { grid-template-columns: 38px 75px 127px 1fr; }
.last { grid-template-columns: 38px 40px 127px 1fr; }
.row:not(.sel):not(.sub):not(.last):not(.head) { grid-template-columns: 38px 40px 103px 49px 1fr; }
.chip { width: 20px; height: 20px; margin-left: 3px; }
.black { background: #000; border: 2px solid #f0f0f0; outline: 1px solid #2c2c2e; }
.nofill { width: 26px; height: 26px; margin-left: 0; }
.pt { font-size: 20px; }
.focus { position: absolute; left: 1px; right: -2px; top: 102px; height: 56px; border: 6px solid #ff961e; border-radius: 4px; }

.note { position: absolute; left: 445px; top: 218px; pointer-events: none; filter: drop-shadow(0 2px 2px rgba(0, 0, 0, .5)); }
.note text { font: 900 58px "Noto Sans CJK JP", sans-serif; fill: #ff961e; stroke: #000; stroke-width: 11px; stroke-linejoin: round; paint-order: stroke; }
.note path { fill: #ff961e; }
```
